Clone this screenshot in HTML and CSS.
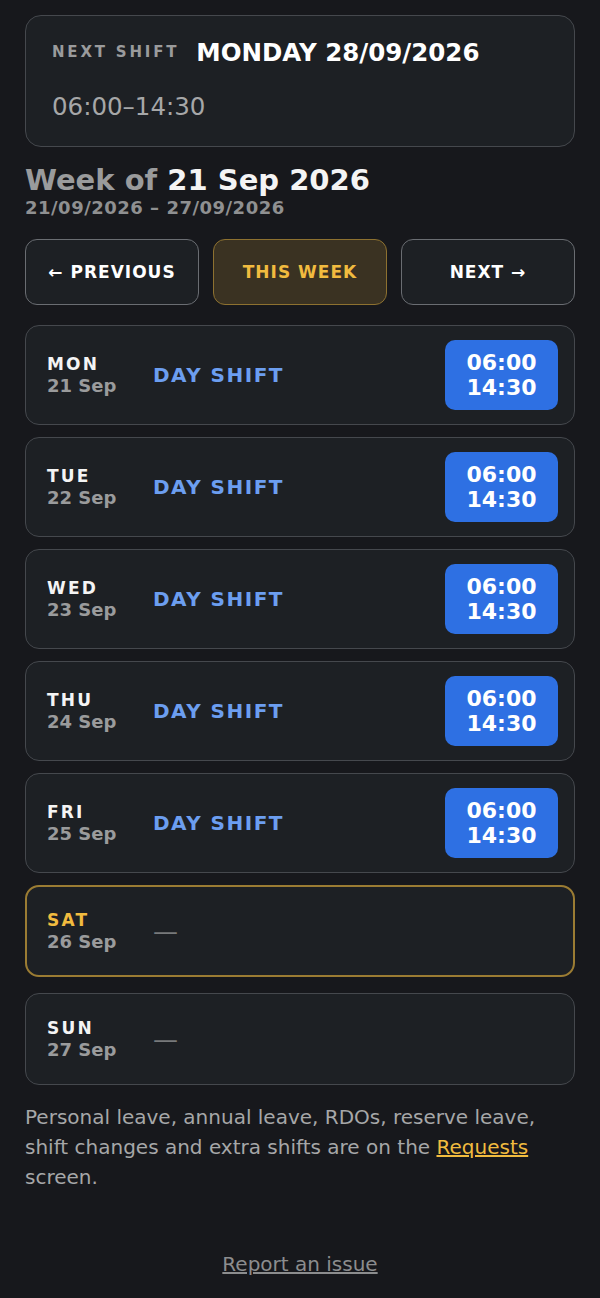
FILE: index.html
```html
<!DOCTYPE html>
<html lang="en">
<head>
  <meta charset="UTF-8" />
  <meta name="viewport" content="width=device-width, initial-scale=1.0"/>
  <title>My Roster</title>
  <link rel="stylesheet" href="styles.css">
</head>
<body>
  <div class="page">
    <div class="next-card">
      <div class="next-top">
        <span class="next-label">NEXT SHIFT</span>
        <span class="next-date">MONDAY 28/09/2026</span>
      </div>
      <div class="next-time">06:00–14:30</div>
    </div>

    <h1 class="week-title"><span class="muted">Week of</span> 21 Sep 2026</h1>
    <div class="week-range">21/09/2026 – 27/09/2026</div>

    <div class="week-nav">
      <button class="nav-btn">← PREVIOUS</button>
      <button class="nav-btn current">THIS WEEK</button>
      <button class="nav-btn">NEXT →</button>
    </div>

    <div class="days">
      <div class="day">
        <div class="day-label"><span class="dow">MON</span><span class="dom">21 Sep</span></div>
        <div class="shift-name">DAY SHIFT</div>
        <div class="shift-time">06:00<br>14:30</div>
      </div>
      <div class="day">
        <div class="day-label"><span class="dow">TUE</span><span class="dom">22 Sep</span></div>
        <div class="shift-name">DAY SHIFT</div>
        <div class="shift-time">06:00<br>14:30</div>
      </div>
      <div class="day">
        <div class="day-label"><span class="dow">WED</span><span class="dom">23 Sep</span></div>
        <div class="shift-name">DAY SHIFT</div>
        <div class="shift-time">06:00<br>14:30</div>
      </div>
      <div class="day">
        <div class="day-label"><span class="dow">THU</span><span class="dom">24 Sep</span></div>
        <div class="shift-name">DAY SHIFT</div>
        <div class="shift-time">06:00<br>14:30</div>
      </div>
      <div class="day">
        <div class="day-label"><span class="dow">FRI</span><span class="dom">25 Sep</span></div>
        <div class="shift-name">DAY SHIFT</div>
        <div class="shift-time">06:00<br>14:30</div>
      </div>
      <div class="day today">
        <div class="day-label"><span class="dow">SAT</span><span class="dom">26 Sep</span></div>
        <div class="shift-none">—</div>
      </div>
      <div class="day">
        <div class="day-label"><span class="dow">SUN</span><span class="dom">27 Sep</span></div>
        <div class="shift-none">—</div>
      </div>
    </div>

    <p class="note">Personal leave, annual leave, RDOs, reserve leave, shift changes and extra shifts are on the <a href="#">Requests</a> screen.</p>

    <div class="report"><a href="#">Report an issue</a></div>
  </div>
</body>
</html>
```

FILE: styles.css
```css
* {
  margin: 0;
  padding: 0;
  box-sizing: border-box;
  font-family: 'DejaVu Sans', sans-serif;
}

body {
  background-color: #17181c;
  color: #f2f2f2;
}

.page {
  padding: 15px 25px 20px;
}

.next-card {
  background-color: #1d2024;
  border: 1px solid #45484d;
  border-radius: 16px;
  padding: 21px 26px 24px;
}

.next-top {
  display: flex;
  align-items: center;
  gap: 17px;
  height: 30px;
}

.next-label {
  font-size: 15px;
  font-weight: bold;
  letter-spacing: 2.8px;
  color: #9a9b9c;
}

.next-date {
  font-size: 24.5px;
  font-weight: bold;
  color: #ffffff;
}

.next-time {
  margin-top: 25px;
  font-size: 24.5px;
  line-height: 30px;
  color: #a6a7a8;
}

.week-title {
  margin-top: 16px;
  font-size: 29px;
  line-height: 34px;
  color: #f4f4f4;
}

.week-title .muted {
  color: #9a9b9c;
}

.week-range {
  font-size: 18px;
  line-height: 22px;
  font-weight: bold;
  letter-spacing: 0.5px;
  color: #8f9091;
}

.week-nav {
  display: grid;
  grid-template-columns: 1fr 1fr 1fr;
  gap: 14px;
  margin-top: 20px;
}

.nav-btn {
  height: 66px;
  background-color: #1d2024;
  border: 1px solid #6a6d72;
  border-radius: 12px;
  color: #ffffff;
  font-size: 17px;
  font-weight: bold;
  letter-spacing: 1px;
}

.nav-btn.current {
  background-color: #3a3222;
  border-color: #8d7130;
  color: #f1bb3f;
}

.days {
  display: flex;
  flex-direction: column;
  gap: 12px;
  margin-top: 20px;
}

.day {
  display: flex;
  align-items: center;
  min-height: 92px;
  padding: 14px 16px 14px 21px;
  background-color: #1d2024;
  border: 1px solid #45484d;
  border-radius: 14px;
}

.day.today {
  border: 2px solid #9b7c33;
  padding-left: 20px;
  margin-bottom: 4px;
}

.day-label {
  width: 106px;
  display: flex;
  flex-direction: column;
  font-weight: bold;
  line-height: 21px;
}

.dow {
  font-size: 17px;
  letter-spacing: 2.2px;
  color: #f4f4f4;
}

.today .dow {
  color: #f1bb3f;
}

.dom {
  font-size: 18px;
  color: #9a9b9c;
}

.shift-name {
  flex: 1;
  font-size: 20px;
  font-weight: bold;
  letter-spacing: 1.5px;
  color: #6c9ef0;
}

.shift-none {
  font-size: 25px;
  color: #77797b;
}

.shift-time {
  width: 113px;
  height: 70px;
  display: flex;
  align-items: center;
  justify-content: center;
  text-align: center;
  background-color: #2e70e3;
  border-radius: 10px;
  color: #ffffff;
  font-size: 22px;
  font-weight: bold;
  line-height: 25px;
}

.note {
  margin-top: 17px;
  font-size: 20px;
  line-height: 30px;
  color: #a6a7a8;
}

.note a {
  color: #f1bb3f;
}

.report {
  margin-top: 60px;
  text-align: center;
  font-size: 20px;
  line-height: 24px;
}

.report a {
  color: #8c8d8e;
}
```
